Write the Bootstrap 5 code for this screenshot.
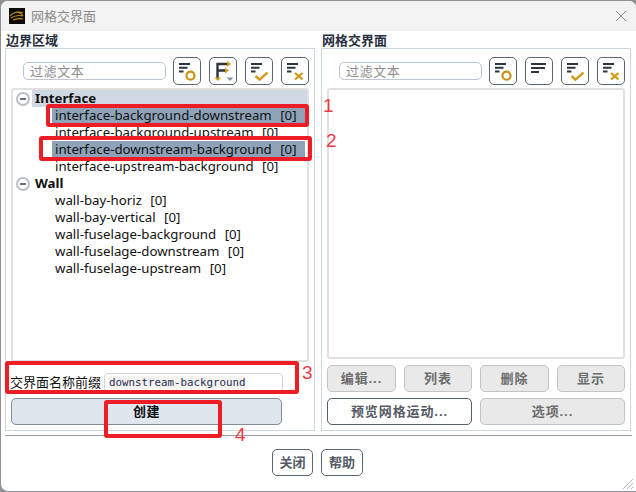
<!DOCTYPE html>
<html lang="zh"><head><meta charset="utf-8"><title>网格交界面</title>
<link href="https://cdn.jsdelivr.net/npm/bootstrap@5.3.0/dist/css/bootstrap.min.css" rel="stylesheet">
<style>
html,body{margin:0;height:492px;overflow:hidden;background:#8f9296}
body{font-family:"Noto Sans","Noto Sans CJK SC",sans-serif;font-size:13px;color:#111}
.stage{width:636px;height:492px;position:relative;overflow:hidden}
.win{position:absolute;left:1px;top:1px;right:0;bottom:1px;background:#fff;border-radius:7px 7px 0 7px;display:flex;flex-direction:column;overflow:hidden}
.tbar{height:30px;background:#f3f3f3;flex:none;padding-left:8px;padding-right:9px;color:#8a8a8a;gap:6px}
.tbar span{font-size:13px;line-height:1}
.panes{padding:0 4px;height:400px;flex:none;gap:6px}
.pane{width:310px;flex:none;display:flex;flex-direction:column}
.ptitle{height:17px;line-height:19px;font-weight:700;font-size:13px;color:#2a2f3f;padding-left:1px}
.pbox{border:1px solid #cdd5e3;height:383px;padding:8px 5px 5px 5px;position:relative;display:flex;flex-direction:column}
.filter-row{height:28px;flex:none;gap:8px;margin-bottom:3px;padding-left:12px}
.fbox{width:143px;flex:none;height:18px;border:1px solid #bcc5d1;border-radius:5px;font-size:13px;color:#8c8c8c;line-height:16px;padding-left:6px;letter-spacing:.6px;margin-right:-1px;margin-top:5px}
.ibtn{width:28px;height:28px;padding:0;border:1px solid #5b6674;border-radius:5px;background:#fff;flex:none;display:block}
.ibtn svg{display:block;margin:-1px}
.treebox{border:2px solid #e0e0e0;border-radius:3px;height:274px;flex:none;overflow:hidden;position:relative}
.treebox.shortb{height:271px}
.rhead{height:17px;line-height:17px;font-weight:700;font-size:13.25px;margin-left:19px;padding-left:3px;background:#d0d8e3;display:block}
.rhead.plain{background:#fff}
.rowl{height:17px;line-height:17px;white-space:nowrap;font-size:13.25px;padding-left:42px;word-spacing:2px}
.rowl.on{background:#8ea2b8;margin-left:39px;padding-left:3px;margin-right:2px}
.rowl i{font-style:normal;margin-left:3px}
.tgl{position:absolute;left:3px;top:2px;width:14px;height:14px;border:2px solid #b9c0c8;border-radius:50%;background:#fff}
.tgl::after{content:"";position:absolute;left:2px;right:2px;top:4px;height:2px;background:#6a7079}
.grp{position:relative}
.name-row{height:19px;margin-top:11px;flex:none;font-size:13px;white-space:nowrap;gap:2px}
.name-row label{width:91px;overflow:hidden;line-height:19px;flex:none;margin-left:-1px;margin-right:1px}
.name-in{width:179px;flex:none;height:19px;border:1px solid #cfd6e0;border-radius:4px;font-family:"DejaVu Sans Mono","Liberation Mono",monospace;font-size:10.8px;line-height:18px;padding-left:4px;color:#1d2f55}
.name-in span{background:#f5f3ef}
.bb{height:27px;border-radius:5px;font-size:13px;font-weight:700;padding:0;line-height:25px;text-align:center;border:1px solid #c0c3c7;background:#e9e9e9;color:#6d6d6d;letter-spacing:.9px}
.bb.act{background:#fff;border-color:#55606e;color:#555b66}
.bb.mk{background:#dfe6ee;border-color:#818c9a;color:#111;width:271px;margin-top:6px;line-height:19px;flex:none;display:block;letter-spacing:.4px}
.btn-grid{display:flex;flex-wrap:wrap;gap:6px 8px;margin-top:6px}
.w1{width:69px}.w2{width:68px}.w3{width:145px}
.sep{height:1px;background:#9a9c9f;margin:4px 4px 0;flex:none}
.foot{gap:8px;padding-top:13px;padding-right:2px}
.fb{width:41px;height:27px;background:#fff;border:1px solid #5b6674;border-radius:5px;font-weight:700;font-size:13px;color:#555b66;padding:0;line-height:25px}
.fb.hp{width:42px}
.rbox{position:absolute;border:4px solid #ee1c25;border-radius:3px;pointer-events:none}
.rnum{position:absolute;color:#ee3a3f;font-size:19px;line-height:1;font-family:"Liberation Sans",sans-serif}
.grip{position:absolute;right:2px;bottom:2px}
</style></head><body>
<svg width="0" height="0" class="d-none" aria-hidden="true"><defs>
<symbol id="ln" viewBox="0 0 28 28"><path d="M6 7h11M6 10.800h8.500M6 14.500h4.500" stroke="#2b3440" stroke-width="2" fill="none"/></symbol>
<symbol id="i-o" viewBox="0 0 28 28"><use href="#ln"/><circle cx="17.500" cy="18.700" r="4" fill="none" stroke="#c8930f" stroke-width="2.200"/></symbol>
<symbol id="i-c" viewBox="0 0 28 28"><use href="#ln"/><path d="M10.500 19l4 3.700 8-7" fill="none" stroke="#d29a14" stroke-width="2.400"/></symbol>
<symbol id="i-x" viewBox="0 0 28 28"><use href="#ln"/><path d="M14 16l7.500 6.500M21.500 16L14 22.500" fill="none" stroke="#d29a14" stroke-width="2.300"/></symbol>
</defs></svg>
<div class="stage">
<div class="win">
 <div class="tbar d-flex align-items-center">
  <svg width="16" height="16" viewBox="0 0 16 16"><rect width="16" height="16" fill="#0c0a04"/><path d="M1 8c3-3 8-5 13-3M2 10c3-2 8-3 12-2M4 12c3-1 7-2 10-1M7 4c3 0 5 1 7 4" stroke="#c98f1c" stroke-width="1.100" fill="none"/></svg>
  <span>网格交界面</span>
  <svg class="ms-auto" width="12" height="12" viewBox="0 0 12 12"><path d="M1 1l10 10M11 1L1 11" stroke="#8a8a8a" stroke-width="1"/></svg>
 </div>
 <div class="panes d-flex">
  <div class="pane">
   <div class="ptitle">边界区域</div>
   <div class="pbox">
    <div class="filter-row d-flex align-items-start">
     <div class="fbox">过滤文本</div>
     <button class="ibtn"><svg width="28" height="28"><use href="#i-o"/></svg></button>
     <button class="ibtn"><svg width="28" height="28" viewBox="0 0 28 28"><path d="M8.500 21V7H19M8.500 13.500H17" stroke="#2b3440" stroke-width="2.400" fill="none"/><path d="M18 4l4 3-4 3zM16 10.500l4 3-4 3zM5.500 20.500h6.500l-3.250 3.500z" fill="#d29a14"/><path d="M17.500 20.500h7l-3.500 3.500z" fill="#8b95a1"/></svg></button>
     <button class="ibtn"><svg width="28" height="28"><use href="#i-c"/></svg></button>
     <button class="ibtn"><svg width="28" height="28"><use href="#i-x"/></svg></button>
    </div>
    <div class="treebox">
     <div class="grp">
      <span class="tgl"></span>
      <div class="rhead">Interface</div>
      <div class="rowl on">interface-background-downstream <i>[0]</i></div>
      <div class="rowl">interface-background-upstream <i>[0]</i></div>
      <div class="rowl on">interface-downstream-background <i>[0]</i></div>
      <div class="rowl">interface-upstream-background <i>[0]</i></div>
     </div>
     <div class="grp">
      <span class="tgl"></span>
      <div class="rhead plain">Wall</div>
      <div class="rowl">wall-bay-horiz <i>[0]</i></div>
      <div class="rowl">wall-bay-vertical <i>[0]</i></div>
      <div class="rowl">wall-fuselage-background <i>[0]</i></div>
      <div class="rowl">wall-fuselage-downstream <i>[0]</i></div>
      <div class="rowl">wall-fuselage-upstream <i>[0]</i></div>
     </div>
    </div>
    <div class="name-row d-flex align-items-center">
     <label>交界面名称前缀</label>
     <div class="name-in"><span>downstream-background</span></div>
    </div>
    <button class="bb mk">创建</button>
   </div>
  </div>
  <div class="pane">
   <div class="ptitle">网格交界面</div>
   <div class="pbox">
    <div class="filter-row d-flex align-items-start">
     <div class="fbox">过滤文本</div>
     <button class="ibtn"><svg width="28" height="28"><use href="#i-o"/></svg></button>
     <button class="ibtn"><svg width="28" height="28" viewBox="0 0 28 28"><path d="M6 7h15M6 11h14M6 15h8" stroke="#2b3440" stroke-width="2" fill="none"/></svg></button>
     <button class="ibtn"><svg width="28" height="28"><use href="#i-c"/></svg></button>
     <button class="ibtn"><svg width="28" height="28"><use href="#i-x"/></svg></button>
    </div>
    <div class="treebox shortb"></div>
    <div class="btn-grid">
     <button class="bb w1">编辑...</button><button class="bb w2">列表</button><button class="bb w1">删除</button><button class="bb w2">显示</button>
     <button class="bb act w3">预览网格运动...</button><button class="bb w3">选项...</button>
    </div>
   </div>
  </div>
 </div>
 <div class="sep"></div>
 <div class="foot d-flex justify-content-center">
  <button class="fb">关闭</button><button class="fb hp">帮助</button>
 </div>
</div>
<svg class="grip" width="14" height="14" viewBox="0 0 14 14"><path d="M13 3L3 13M13 7l-6 6M13 11l-2 2" stroke="#b7b9bb" fill="none"/></svg>
<div class="rbox" style="left:46px;top:104px;width:263px;height:23px"></div>
<div class="rbox" style="left:39px;top:136px;width:273px;height:25px"></div>
<div class="rbox" style="left:5px;top:361px;width:294px;height:33px"></div>
<div class="rbox" style="left:104px;top:400px;width:118px;height:38px"></div>
<div class="rnum" style="left:323px;top:96px">1</div>
<div class="rnum" style="left:326px;top:131px">2</div>
<div class="rnum" style="left:302px;top:363px">3</div>
<div class="rnum" style="left:235px;top:425px">4</div>
</div>
</body></html>
